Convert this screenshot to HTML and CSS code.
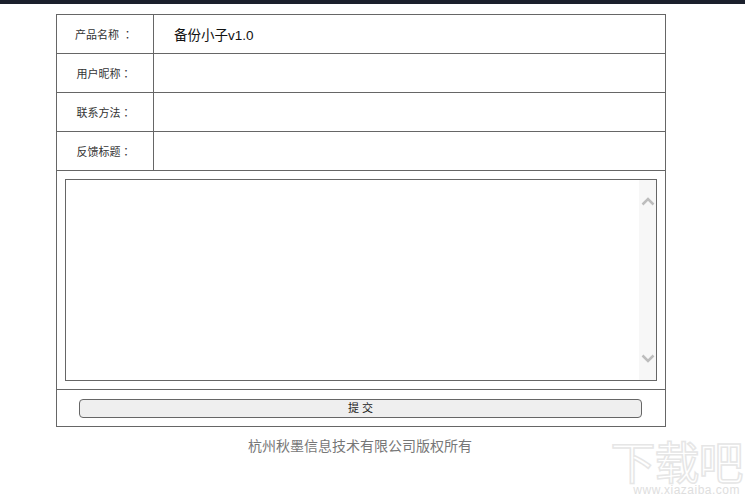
FILE: index.html
```html
<!DOCTYPE html>
<html lang="zh">
<head>
<meta charset="utf-8">
<title>反馈</title>
<link rel="stylesheet" href="styles.css">
</head>
<body>
<div class="topbar"></div>
<main class="page">
  <form class="form">
    <div class="row">
      <div class="label">产品名称 <span class="colon">：</span></div>
      <div class="value">备份小子v1.0</div>
    </div>
    <div class="row">
      <div class="label">用户昵称<span class="colon">：</span></div>
      <div class="value"></div>
    </div>
    <div class="row">
      <div class="label">联系方法<span class="colon">：</span></div>
      <div class="value"></div>
    </div>
    <div class="row">
      <div class="label">反馈标题<span class="colon">：</span></div>
      <div class="value"></div>
    </div>
    <div class="message">
      <div class="textbox">
        <div class="scrollbar">
          <svg class="arrow" width="14" height="9" viewBox="0 0 14 9"><path d="M1.500 7.500 7 2l5.500 5.500" fill="none" stroke="#bdbdbd" stroke-width="2.500"/></svg>
          <svg class="arrow" width="14" height="9" viewBox="0 0 14 9"><path d="M1.500 1.500 7 7l5.500-5.500" fill="none" stroke="#bdbdbd" stroke-width="2.500"/></svg>
        </div>
      </div>
    </div>
    <div class="actions">
      <div class="button">提 交</div>
    </div>
  </form>
  <p class="copyright">杭州秋墨信息技术有限公司版权所有</p>
</main>
<div class="watermark">
  <div class="wm-title">下载吧</div>
  <div class="wm-url">www.xiazaiba.com</div>
</div>
</body>
</html>
```
FILE: styles.css
```css
* { box-sizing: border-box; }
html, body { margin: 0; height: 100%; }
body {
  background: #fff;
  overflow: hidden;
  position: relative;
  font-family: "Liberation Sans", "Noto Sans CJK SC", sans-serif;
}
.topbar { height: 4px; background: #1b202c; }
.page { width: 610px; margin: 10px 0 0 56px; }
.form { border: 1px solid #666; }
.row { display: flex; height: 39px; border-bottom: 1px solid #666; }
.label {
  width: 97px;
  padding-right: 2px;
  border-right: 1px solid #666;
  display: flex;
  align-items: center;
  justify-content: center;
  white-space: pre;
  font-size: 11px;
  color: #333;
}
.colon { font-family: "Noto Sans CJK TC", sans-serif; }
.value {
  flex: 1;
  display: flex;
  align-items: center;
  padding-left: 20px;
  font-size: 13.500px;
  color: #111;
}
.message { height: 219px; padding: 8px; border-bottom: 1px solid #666; }
.textbox {
  height: 202px;
  border: 1px solid #666;
  display: flex;
  justify-content: flex-end;
  background: #fff;
}
.scrollbar {
  width: 17px;
  background: #f7f7f7;
  display: flex;
  flex-direction: column;
  justify-content: space-between;
  align-items: center;
  padding: 17px 0;
}
.arrow { display: block; }
.actions { height: 36px; padding: 9px 23px 0 22px; }
.button {
  height: 19px;
  border: 1px solid #666;
  border-radius: 4px;
  background: #efefef;
  font-size: 11px;
  line-height: 17px;
  text-align: center;
  color: #222;
}
.copyright {
  margin: 10px 0 0;
  padding-right: 2px;
  font-size: 14px;
  line-height: 18px;
  color: #777;
  text-align: center;
}
.watermark {
  position: absolute;
  left: 608px;
  top: 438px;
  width: 137px;
  color: #fff;
}
.wm-title {
  font-family: "Noto Sans CJK SC", sans-serif;
  font-size: 45px;
  line-height: 46px;
  letter-spacing: -1px;
  text-align: center;
  white-space: nowrap;
  -webkit-text-stroke: 1.500px #e6e6e6;
}
.wm-url {
  margin-right: 5px;
  font-size: 12px;
  line-height: 12px;
  letter-spacing: 0.500px;
  color: #dedede;
  text-align: right;
  white-space: nowrap;
}
```
